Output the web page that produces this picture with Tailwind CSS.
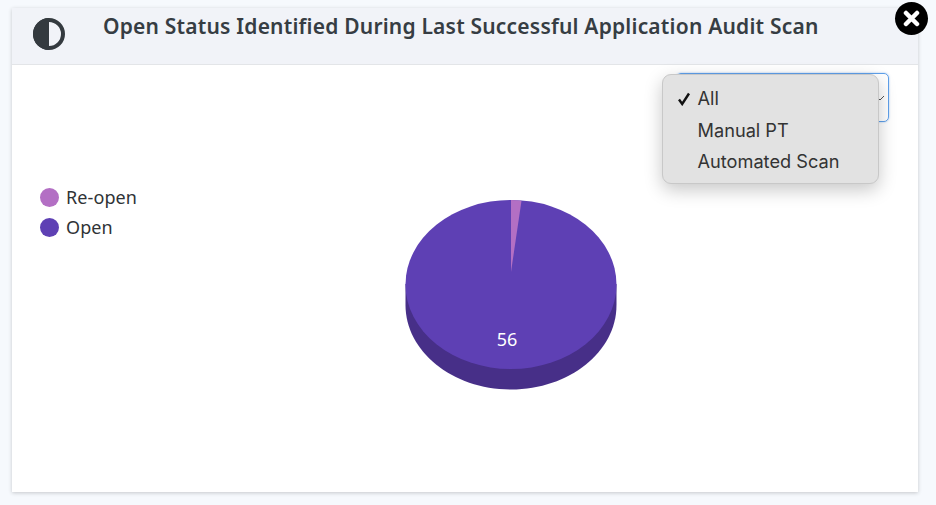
<!DOCTYPE html>
<html><head><meta charset="utf-8"><script src="https://cdn.jsdelivr.net/npm/@tailwindcss/browser@4"></script></head>
<body class="w-[936px] h-[505px] overflow-hidden bg-[#f6f9fd] font-['Noto_Sans',sans-serif]">
<div class="relative w-[936px] h-[505px] pt-2 pl-3">
  <div class="w-[906px] h-[484px] bg-white shadow-[0_1px_4px_rgba(0,0,0,0.2)] flex flex-col">
    <header class="h-[57px] shrink-0 bg-[#f1f3f8] border-b border-[#e3e5e8] flex items-start">
      <svg class="ml-[21px] mt-[10px] w-8 h-8" viewBox="0 0 32 32"><circle cx="16" cy="16" r="14" fill="none" stroke="#343a3f" stroke-width="4"/><path d="M16 0a16 16 0 0 0 0 32z" fill="#343a3f"/></svg>
      <h1 class="ml-[38px] mt-[4px] text-[21px] leading-[28px] tracking-[0.2px] font-semibold text-[#363d43] whitespace-nowrap">Open Status Identified During Last Successful Application Audit Scan</h1>
    </header>
    <div class="relative flex-1 flex flex-col">
      <div class="flex justify-end pt-[8px] pr-[29px]">
        <div class="w-[213px] h-[49px] rounded-[5px] border border-[#5fa0ea] shadow-[0_0_2px_rgba(80,150,230,0.6)] flex items-center justify-end pr-[3px]">
          <svg class="w-[10px] h-[10px]" viewBox="0 0 10 10"><path d="M1 3l4 4 4-4" fill="none" stroke="#555" stroke-width="1"/></svg>
        </div>
      </div>
      <ul class="mt-[64px] ml-7 flex flex-col gap-[8px] text-[18px] leading-[22px] tracking-[0.1px] text-[#2f3336]">
        <li class="flex items-center gap-[7px]"><span class="w-[19px] h-[19px] rounded-full bg-[#b36fc4]"></span>Re-open</li>
        <li class="flex items-center gap-[7px]"><span class="w-[19px] h-[19px] rounded-full bg-[#5e40b4]"></span>Open</li>
      </ul>
      <div class="absolute left-[393px] top-[134px] w-[212px] h-[191px]">
        <svg class="w-[212px] h-[191px]" viewBox="0 0 212 191">
          <path d="M0.500 85v21c0 46.700 47.200 84.500 105.500 84.500s105.500-37.800 105.500-84.500v-21z" fill="#472f88"/>
          <ellipse cx="106" cy="85.500" rx="105.500" ry="84.500" fill="#5e40b4"/>
          <path d="M106 73L106 1C109.500 1 113 1.200 116.500 1.700z" fill="#b36fc4"/>
          <text x="102" y="147" text-anchor="middle" font-size="18" fill="#fff" font-family="Noto Sans">56</text>
        </svg>
      </div>
    </div>
  </div>
  <button class="absolute left-[895px] top-[2px] w-[33px] h-[33px] rounded-full bg-black flex items-center justify-center">
    <svg class="w-[17px] h-[17px]" viewBox="0 0 17 17"><path d="M3 3l11 11M14 3L3 14" stroke="#fff" stroke-width="4.500" stroke-linecap="round"/></svg>
  </button>
  <div class="absolute left-[662px] top-[74px] w-[217px] h-[110px] rounded-[9px] bg-[#e2e2e2] border border-[#c8c8c8] shadow-[0_6px_18px_rgba(0,0,0,0.22)] pt-2 font-['Inter',sans-serif] text-[18.200px] leading-[31.500px] text-[#333]">
    <div class="relative pl-[34.500px]"><svg class="absolute left-[14px] top-[9px] w-[14px] h-[14px]" viewBox="0 0 14 14"><path d="M2 7.500l3.200 4.500L12 1.500" fill="none" stroke="#111" stroke-width="2.400"/></svg>All</div>
    <div class="pl-[34.500px]">Manual PT</div>
    <div class="pl-[34.500px]">Automated Scan</div>
  </div>
</div>
</body></html>
